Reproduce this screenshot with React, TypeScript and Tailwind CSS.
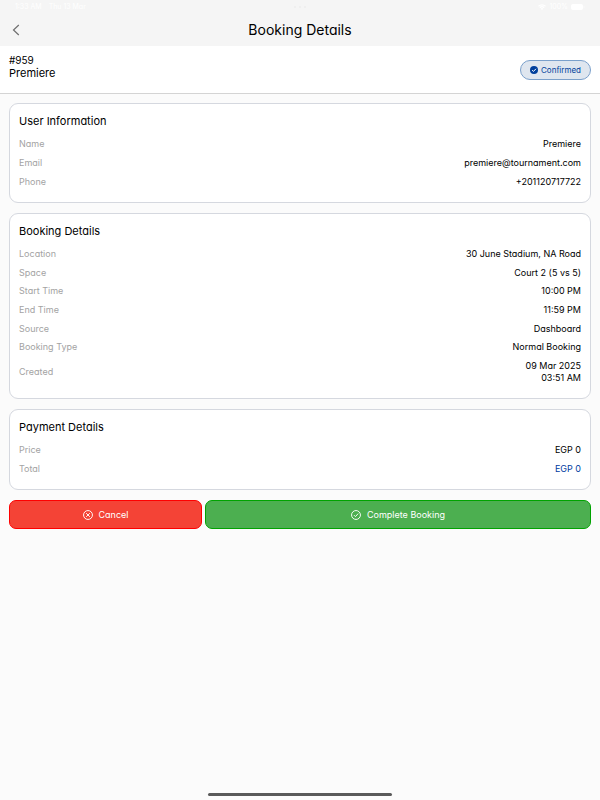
import type { ReactNode } from "react";

type RowData = { label: string; value: ReactNode; accent?: boolean };

function Row({ label, value, accent }: RowData) {
  return (
    <div className="flex items-center justify-between text-[9px] leading-[12px]">
      <dt className="text-[#a3a3a3]">{label}</dt>
      <dd className={accent ? "text-right text-[#003b9f]" : "text-right text-black"}>{value}</dd>
    </div>
  );
}

function Card({ title, rows, tall }: { title: string; rows: RowData[]; tall?: boolean }) {
  return (
    <section className="rounded-[9px] border border-[#d5d8df] bg-white px-[9px] pt-[9px] pb-[14px]">
      <h2 className="text-[11px] leading-[16px] text-black">{title}</h2>
      <dl className={tall ? "mt-[9px] flex min-h-[136px] flex-col justify-between" : "mt-[9px] flex flex-col gap-[7px]"}>
        {rows.map((row) => (
          <Row key={row.label} {...row} />
        ))}
      </dl>
    </section>
  );
}

const userRows: RowData[] = [
  { label: "Name", value: "Premiere" },
  { label: "Email", value: "premiere@tournament.com" },
  { label: "Phone", value: "+201120717722" },
];

const bookingRows: RowData[] = [
  { label: "Location", value: "30 June Stadium, NA Road" },
  { label: "Space", value: "Court 2 (5 vs 5)" },
  { label: "Start Time", value: "10:00 PM" },
  { label: "End Time", value: "11:59 PM" },
  { label: "Source", value: "Dashboard" },
  { label: "Booking Type", value: "Normal Booking" },
  { label: "Created", value: <>09 Mar 2025<br />03:51 AM</> },
];

const paymentRows: RowData[] = [
  { label: "Price", value: "EGP 0" },
  { label: "Total", value: "EGP 0", accent: true },
];

function StatusBar() {
  return (
    <div className="grid h-[14px] grid-cols-3 items-center px-[15px] text-[7px] leading-[14px] text-white">
      <div className="flex gap-[7px]">
        <span>1:33 AM</span>
        <span>Thu 13 Mar</span>
      </div>
      <div className="flex justify-center gap-[3px]">
        <span className="size-[2px] rounded-full bg-[#ededed]" />
        <span className="size-[2px] rounded-full bg-[#ededed]" />
        <span className="size-[2px] rounded-full bg-[#ededed]" />
      </div>
      <div className="flex items-center justify-end gap-[3px]">
        <svg className="h-[6px] w-2" viewBox="0 0 16 12" fill="none" stroke="currentColor" strokeWidth="2.4">
          <path d="M1 4.5a10 10 0 0 1 14 0M3.7 7.4a6.2 6.2 0 0 1 8.6 0" />
          <path d="M8 12 5.5 9.4a3.6 3.6 0 0 1 5 0Z" fill="currentColor" stroke="none" />
        </svg>
        <span>100%</span>
        <svg className="h-[6px] w-[14px]" viewBox="0 0 28 12" fill="currentColor">
          <rect width="24" height="12" rx="4" />
          <path d="M25.5 4c2 .6 2 3.4 0 4Z" />
        </svg>
      </div>
    </div>
  );
}

export default function App() {
  return (
    <div className="flex min-h-screen flex-col bg-[#fbfbfb] font-['Inter','Liberation_Sans',sans-serif] [font-feature-settings:'cv11']">
      <header className="bg-[#f5f5f5]">
        <StatusBar />
        <div className="grid h-8 grid-cols-[24px_1fr_24px] items-center px-[9px]">
          <button type="button" aria-label="Back" className="flex h-6 items-center pl-[3px] text-[#6f6f6f]">
            <svg className="h-3 w-2" viewBox="0 0 8 12" fill="none" stroke="currentColor" strokeWidth="1.2">
              <path d="M6.8 1 1.5 6l5.3 5" />
            </svg>
          </button>
          <h1 className="text-center text-[14px] leading-[20px] text-black">Booking Details</h1>
        </div>
      </header>

      <div className="flex items-center justify-between border-b border-[#d4d4d4] bg-white px-[9px] py-2">
        <div className="pb-[5px] text-black">
          <p className="text-[10px] leading-[13px]">#959</p>
          <p className="text-[11px] leading-[13px]">Premiere</p>
        </div>
        <span className="flex h-5 items-center gap-[3px] rounded-full border border-[#7ba0cb] bg-[#dfe6ef] px-[9px] text-[8px] leading-[12px] text-[#003f9c]">
          <svg className="size-2" viewBox="0 0 16 16">
            <circle cx="8" cy="8" r="8" fill="currentColor" />
            <path d="m4.3 8.3 2.6 2.6 5-5.3" fill="none" stroke="#ffffff" strokeWidth="2" />
          </svg>
          Confirmed
        </span>
      </div>

      <main className="flex flex-col gap-[10px] px-[9px] pt-[9px]">
        <Card title="User Information" rows={userRows} />
        <Card title="Booking Details" rows={bookingRows} tall />
        <Card title="Payment Details" rows={paymentRows} />
        <div className="grid grid-cols-[1fr_2fr] gap-[3px] text-[9px] leading-[12px] text-white">
          <button type="button" className="flex h-[29px] items-center justify-center gap-[6px] rounded-[7px] border border-[#ff0000] bg-[#f44336]">
            <svg className="size-[10px]" viewBox="0 0 18 18" fill="none" stroke="currentColor" strokeWidth="1.7">
              <circle cx="9" cy="9" r="8" />
              <path d="m5.7 5.7 6.6 6.6m0-6.600-6.600 6.600" />
            </svg>
            Cancel
          </button>
          <button type="button" className="flex h-[29px] items-center justify-center gap-[6px] rounded-[7px] border border-[#00a300] bg-[#4caf50]">
            <svg className="size-[10px]" viewBox="0 0 18 18" fill="none" stroke="currentColor" strokeWidth="1.7">
              <circle cx="9" cy="9" r="8" />
              <path d="m5.3 9.2 2.7 2.7 5-5.5" />
            </svg>
            Complete Booking
          </button>
        </div>
      </main>

      <div className="mx-auto mt-auto mb-1 h-[3px] w-[184px] rounded-full bg-[#5a5a5a]" />
    </div>
  );
}
